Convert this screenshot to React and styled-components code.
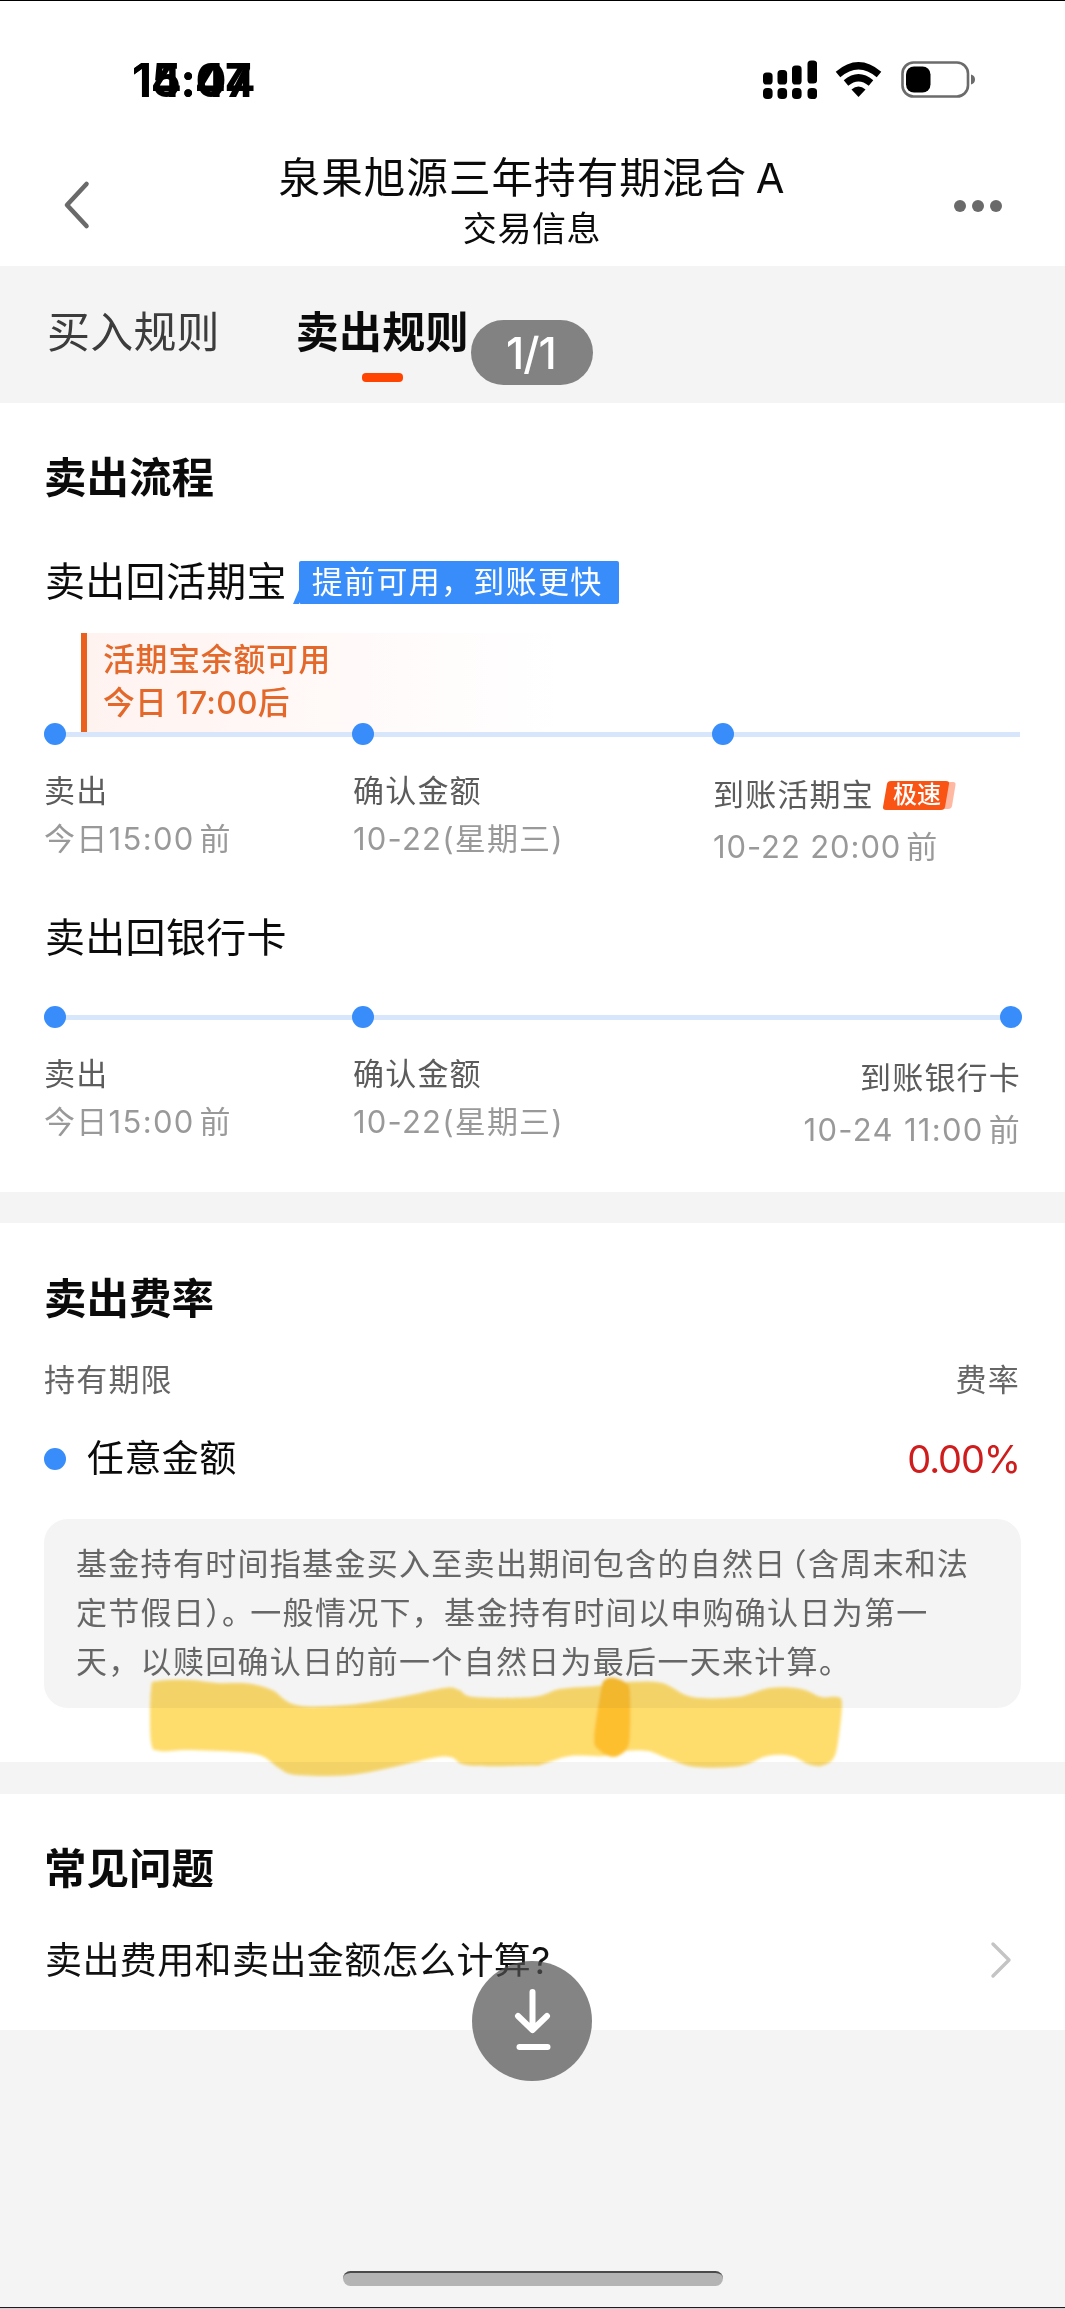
import React from "react";
import styled, { createGlobalStyle } from "styled-components";

const GlobalStyle = createGlobalStyle`
  * { box-sizing: border-box; }
  body {
    margin: 0;
    background: #f4f4f4;
    font-family: Inter, "Noto Sans CJK SC", sans-serif;
    color: #0b0b0b;
  }
`;

const Screen = styled.main`
  position: relative;
  display: flex;
  flex-direction: column;
  width: 1065px;
  height: 2309px;
  background: #f4f4f4;
  border-top: 1px solid #000;
  border-bottom: 1px solid #cfcfcf;
  box-shadow: inset 0 -1px #1c1c1e;
  overflow: hidden;
`;

const Text = styled.span`
  display: block;
  white-space: nowrap;
  font-size: ${(p) => p.$size}px;
  line-height: ${(p) => p.$line}px;
  letter-spacing: ${(p) => p.$track || 0}px;
  word-spacing: ${(p) => p.$word || 0}px;
  font-weight: ${(p) => p.$weight || 400};
  color: ${(p) => p.$color || "#0b0b0b"};
`;

const Kern = styled.span`
  margin-left: ${(p) => p.$before || 0}px;
  margin-right: ${(p) => p.$after || 0}px;
`;

const HalfWidth = styled(Kern)`
  font-feature-settings: "halt" 1;
`;

const StatusBar = styled.header`
  display: flex;
  justify-content: space-between;
  align-items: center;
  height: 129px;
  padding: 28px 89px 0 132px;
  background: #fff;
`;

const Clock = styled.div`
  display: grid;
  font-size: 46px;
  line-height: 52px;
  font-weight: 700;
  color: #000;
`;

const ClockFace = styled.span`
  grid-area: 1 / 1;
  letter-spacing: ${(p) => p.$track}px;
`;

const StatusIcons = styled.div`
  display: flex;
  align-items: center;
`;

const SignalBox = styled.div`
  display: flex;
  margin-right: 18px;
`;

const WifiBox = styled.div`
  display: flex;
  margin-right: 19px;
`;

const NavBar = styled.nav`
  display: flex;
  justify-content: space-between;
  align-items: flex-start;
  height: 136px;
  padding: 20px 63px 0 62px;
  background: #fff;
`;

const NavTitle = styled.div`
  display: flex;
  flex-direction: column;
  align-items: center;
`;

const NavIcon = styled.div`
  display: flex;
  justify-content: ${(p) => p.$align};
  width: 50px;
  padding-top: ${(p) => p.$top}px;
`;

const Tabs = styled.div`
  display: flex;
  gap: 76px;
  height: 137px;
  padding: 36px 47px 0;
`;

const Tab = styled.div`
  display: flex;
  flex-direction: column;
  align-items: center;
  gap: 11px;
`;

const TabMark = styled.i`
  width: 41px;
  height: 9px;
  border-radius: 4px;
  background: #ff4400;
`;

const Section = styled.section`
  display: flex;
  flex-direction: column;
  height: ${(p) => p.$height}px;
  margin-bottom: ${(p) => p.$gap || 0}px;
  padding: ${(p) => p.$top}px 44px 0;
  background: #fff;
`;

const TitleRow = styled.div`
  display: flex;
  align-items: center;
  height: 60px;
  margin-top: ${(p) => p.$mt}px;
  padding-left: 1px;
`;

const BubbleWrap = styled.div`
  display: flex;
  align-items: flex-end;
  margin-left: 6px;
`;

const Bubble = styled.div`
  height: 43px;
  width: 320px;
  padding-left: 13px;
  border-radius: 2px;
  background: #388dfa;
`;

const Notice = styled.div`
  width: 480px;
  height: 99px;
  margin: 21px 0 0 37px;
  padding: 5px 0 0 16px;
  border-left: 6px solid #e9611c;
  background: linear-gradient(90deg, #fff3f0, #fff9f8 50%, #ffffff);
`;

const Track = styled.div`
  display: grid;
  grid-template-columns: ${(p) => p.$cols};
  justify-content: start;
  align-items: center;
  height: 22px;
  margin-top: ${(p) => p.$mt}px;
  background: linear-gradient(#d8e6fc, #d8e6fc) 0 9px / 976px 5px no-repeat;
`;

const Dot = styled.i`
  width: 22px;
  height: 22px;
  border-radius: 50%;
  background: #388dfa;
`;

const Steps = styled.div`
  display: flex;
  height: 100px;
  margin-top: 22px;
`;

const Step = styled.div`
  display: flex;
  flex-direction: column;
  align-items: ${(p) => (p.$end ? "flex-end" : "flex-start")};
  flex: ${(p) => (p.$width ? `0 0 ${p.$width}px` : "1")};
  gap: ${(p) => p.$gap || 0}px;
  padding-top: ${(p) => p.$top || 0}px;
`;

const StepHead = styled.div`
  display: flex;
  align-items: center;
  gap: 9px;
`;

const Speed = styled.div`
  display: grid;
  width: 73px;
  height: 29px;
`;

const SpeedShape = styled.svg`
  grid-area: 1 / 1;
`;

const SpeedText = styled.span`
  grid-area: 1 / 1;
  padding-left: 10px;
  font-size: 24px;
  line-height: 28px;
  font-weight: 500;
  color: #fff;
`;

const Row = styled.div`
  display: flex;
  justify-content: space-between;
  align-items: center;
  height: ${(p) => p.$height}px;
  margin-top: ${(p) => p.$mt || 0}px;
  padding: 0 1px 0 ${(p) => p.$left || 0}px;
`;

const Legend = styled.div`
  display: flex;
  align-items: center;
  gap: 21px;
`;

const Note = styled.div`
  width: 977px;
  height: 189px;
  margin-top: 32px;
  padding: 21px 32px 0;
  border-radius: 24px;
  background: #f4f4f4;
`;

const Marker = styled.svg`
  position: absolute;
  left: 140px;
  top: 1669px;
  mix-blend-mode: multiply;
`;

const PageBadge = styled.div`
  position: absolute;
  left: 471px;
  top: 319px;
  display: flex;
  justify-content: center;
  align-items: center;
  width: 122px;
  height: 65px;
  padding-right: 2px;
  border-radius: 33px;
  background: #828282;
`;

const SaveButton = styled.button`
  position: absolute;
  left: 472px;
  top: 1960px;
  width: 120px;
  height: 120px;
  padding: 0;
  border: 0;
  border-radius: 50%;
  background: rgba(80, 80, 80, 0.7);
`;

const HomeBar = styled.div`
  position: absolute;
  left: 343px;
  top: 2270px;
  width: 380px;
  height: 15px;
  border-radius: 8px;
  border-top: 2px solid #4a4a4a;
  background: #b4b4b4;
`;

function Signal() {
  const bars = [
    [0, 12], [14.5, 9.5], [29, 5], [44.5, 0],
  ];
  return (
    <svg width="54" height="40" viewBox="0 0 54 40">
      {bars.map(([x, y]) => (
        <g key={x}>
          <rect x={x} y={y + 0.5} width="9.6" height={(x > 40 ? 23 : 24) - y} rx="3.6" />
          <rect x={x} y="28" width="9.6" height="11" rx="4" />
        </g>
      ))}
    </svg>
  );
}

function Wifi() {
  return (
    <svg width="47" height="36" viewBox="0 0 47 36">
      <g fill="none" stroke="#000" strokeWidth="7">
        <path d="M3 12.5 Q23.5 -5 44 12.5" />
        <path d="M11 21 Q23.5 10.5 36 21" />
      </g>
      <path d="M16.5 27.5 Q23.5 21.5 30.5 27.5 L23.5 35 Z" />
    </svg>
  );
}

function Battery() {
  return (
    <svg width="75" height="38" viewBox="0 0 75 38">
      <rect x="1.5" y="1.5" width="65.5" height="34" rx="11" fill="none" stroke="#6b6b6b" strokeWidth="2.6" />
      <rect x="5" y="5.5" width="24.5" height="26" rx="8" />
      <path d="M70 13.5 Q74 14.5 74 18.5 Q74 22.5 70 23.5 Z" fill="#6b6b6b" />
    </svg>
  );
}

// Closed Catmull-Rom curve through the outline points of a marker stroke.
function smoothOutline(points) {
  const n = points.length;
  const at = (i) => points[(i + n) % n];
  let d = `M${at(0)[0]} ${at(0)[1]}`;
  for (let i = 0; i < n; i++) {
    const [a, b, c, e] = [at(i - 1), at(i), at(i + 1), at(i + 2)];
    d += ` C${b[0] + (c[0] - a[0]) / 6} ${b[1] + (c[1] - a[1]) / 6} ${c[0] - (e[0] - b[0]) / 6} ${c[1] - (e[1] - b[1]) / 6} ${c[0]} ${c[1]}`;
  }
  return d + "Z";
}

const strokeOutline = [
  [151, 1689], [158, 1681], [190, 1680], [217, 1683], [248, 1683.5], [272, 1690],
  [296, 1705], [347, 1705], [401, 1697], [445, 1688], [459, 1690], [474, 1697],
  [533, 1697], [560, 1689], [597, 1686], [628, 1682], [662, 1683], [692, 1697],
  [737, 1697], [770, 1688], [801, 1689], [821, 1697], [837, 1697], [842, 1704],
  [838, 1742], [833, 1759], [821, 1766], [808, 1764], [791, 1756], [767, 1756],
  [740, 1766], [696, 1767], [669, 1759], [648, 1751], [625, 1751], [604, 1756],
  [570, 1756], [543, 1764], [533, 1765.5], [469, 1765.5], [452, 1757.6],
  [435, 1757.6], [398, 1766], [350, 1775], [296, 1775], [279, 1768], [262, 1756],
  [238, 1752], [187, 1750], [160, 1751], [151, 1742],
];

const overlapOutline = [
  [601, 1690], [605, 1680], [614, 1678], [626, 1683], [630, 1692],
  [630, 1735], [626, 1750], [613, 1757], [599, 1750], [594, 1738],
];

function FlowLabels({ last }) {
  return (
    <Steps>
      <Step $width={309}>
        <Text $size={31} $track={1.2} $line={48} $color="#5c5c5c">卖出</Text>
        <Text $size={31} $track={1.3} $line={48} $color="#999">今日15:00<Kern $before={5}>前</Kern></Text>
      </Step>
      <Step $width={360}>
        <Text $size={31} $track={1.2} $line={48} $color="#5c5c5c">确认金额</Text>
        <Text $size={31} $track={1.2} $line={48} $color="#999">10-22(星期三)</Text>
      </Step>
      {last}
    </Steps>
  );
}

export default function App() {
  return (
    <>
      <GlobalStyle />
      <Screen>
        <StatusBar>
          <Clock>
            <ClockFace $track={-0.4}>15:07</ClockFace>
            <ClockFace $track={-1.2}>14:44</ClockFace>
          </Clock>
          <StatusIcons>
            <SignalBox><Signal /></SignalBox>
            <WifiBox><Wifi /></WifiBox>
            <Battery />
          </StatusIcons>
        </StatusBar>
        <NavBar>
          <NavIcon $align="flex-start" $top={30}>
            <svg width="30" height="50" viewBox="0 0 30 50">
              <path d="M24.5 4 L5 25 L24.5 46" fill="none" stroke="#6a6a6a" strokeWidth="4.6" strokeLinecap="round" strokeLinejoin="round" />
            </svg>
          </NavIcon>
          <NavTitle>
            <Text $size={41.6} $track={1} $word={-4} $line={56}>泉果旭源三年持有期混合 A</Text>
            <Text $size={34} $track={0.6} $line={46}>交易信息</Text>
          </NavTitle>
          <NavIcon $align="flex-end" $top={50}>
            <svg width="48" height="12" viewBox="0 0 48 12">
              <circle cx="6" cy="6" r="6" fill="#6a6a6a" />
              <circle cx="24" cy="6" r="6" fill="#6a6a6a" />
              <circle cx="42" cy="6" r="6" fill="#6a6a6a" />
            </svg>
          </NavIcon>
        </NavBar>
        <Tabs>
          <Tab>
            <Text $size={43} $track={0.2} $line={60} $color="#3c3c3c">买入规则</Text>
          </Tab>
          <Tab>
            <Text $size={43} $track={0.2} $line={60} $weight={700}>卖出规则</Text>
            <TabMark />
          </Tab>
        </Tabs>

        <Section $height={789} $gap={31} $top={45}>
          <Text $size={42.5} $line={60} $weight={700}>卖出流程</Text>
          <TitleRow $mt={44}>
            <Text $size={40} $track={0.3} $line={60}>卖出回活期宝</Text>
            <BubbleWrap>
              <svg width="6" height="14" viewBox="0 0 6 14">
                <path d="M6 0 L6 14 L0 14 Z" fill="#388dfa" />
              </svg>
              <Bubble>
                <Text $size={31} $track={1.3} $line={41} $color="#fff">提前可用，到账更快</Text>
              </Bubble>
            </BubbleWrap>
          </TitleRow>
          <Notice>
            <Text $size={31.8} $track={0.8} $line={43} $weight={500} $color="#e3682a">活期宝余额可用</Text>
            <Text $size={31.8} $track={0.2} $line={43} $weight={500} $color="#e3682a">今日 17:00后</Text>
          </Notice>
          <Track $mt={-9} $cols="308px 360px 22px">
            <Dot /><Dot /><Dot />
          </Track>
          <FlowLabels
            last={
              <Step $top={4} $gap={4}>
                <StepHead>
                  <Text $size={31} $track={1.2} $line={48} $color="#5c5c5c">到账活期宝</Text>
                  <Speed>
                    <SpeedShape width="73" height="29" viewBox="0 0 73 29">
                      <path d="M12 1 H70 Q73 1 72.5 4 L69 25 Q68.400 28 65 28 H12 Z" fill="#ffb9a3" />
                      <path d="M8 0 H63 Q66.500 0 66 3 L62 26 Q61.500 29 58 29 H3 Q-.5 29 0 26 L4 3 Q4.500 0 8 0 Z" fill="#fa5414" />
                    </SpeedShape>
                    <SpeedText>极速</SpeedText>
                  </Speed>
                </StepHead>
                <Text $size={31} $track={0.9} $line={48} $color="#999">10-22 20:00<Kern $before={5}>前</Kern></Text>
              </Step>
            }
          />
          <TitleRow $mt={41}>
            <Text $size={40} $track={0.3} $line={60}>卖出回银行卡</Text>
          </TitleRow>
          <Track $mt={38} $cols="308px 648px 22px">
            <Dot /><Dot /><Dot />
          </Track>
          <FlowLabels
            last={
              <Step $top={4} $gap={4} $end>
                <Text $size={31} $track={1.2} $line={48} $color="#5c5c5c">到账银行卡</Text>
                <Text $size={31} $track={1.3} $line={48} $color="#999">10-24 11:00<Kern $before={5}>前</Kern></Text>
              </Step>
            }
          />
        </Section>

        <Section $height={539} $gap={32} $top={46}>
          <Text $size={42.5} $line={60} $weight={700}>卖出费率</Text>
          <Row $height={48} $mt={27}>
            <Text $size={31} $track={1.2} $line={48} $color="#666">持有期限</Text>
            <Text $size={31} $track={1.2} $line={48} $color="#666">费率</Text>
          </Row>
          <Row $height={56} $mt={27}>
            <Legend>
              <Dot />
              <Text $size={37} $track={0.4} $line={56}>任意金额</Text>
            </Legend>
            <Text $size={38} $track={-1.1} $line={56} $color="#cf1d1d">0.00%</Text>
          </Row>
          <Note>
            <Text $size={31} $track={1.3} $line={48.8} $color="#666">
              基金持有时间指基金买入至卖出期间包含的自然日<HalfWidth $before={4.5}>（</HalfWidth>含周末和法
            </Text>
            <Text $size={31} $track={1.3} $line={48.8} $color="#666">
              定节假日<Kern $after={-4}>）。</Kern>一般情况下，基金持有时间以申购确认日为第一
            </Text>
            <Text $size={31} $track={1.3} $line={48.8} $color="#666">
              天，以赎回确认日的前一个自然日为最后一天来计算。
            </Text>
          </Note>
        </Section>

        <Section $height={236} $top={45}>
          <Text $size={42.5} $line={60} $weight={700}>常见问题</Text>
          <Row $height={56} $mt={34} $left={1}>
            <Text $size={37} $track={0.4} $line={56} $color="#111">卖出费用和卖出金额怎么计算?</Text>
            <svg width="30" height="40" viewBox="0 0 30 40">
              <path d="M3 3 L19 19 L3 35" fill="none" stroke="#c4c4c4" strokeWidth="3.4" strokeLinecap="round" strokeLinejoin="round" />
            </svg>
          </Row>
        </Section>

        <Marker width="710" height="120" viewBox="140 1670 710 120">
          <defs>
            <filter id="soft" x="-5%" y="-10%" width="110%" height="120%">
              <feGaussianBlur stdDeviation="1.4" />
            </filter>
          </defs>
          <g filter="url(#soft)">
            <path d={smoothOutline(strokeOutline)} fill="#fedd6d" />
            <path d={smoothOutline(overlapOutline)} fill="#fdbf2d" />
          </g>
        </Marker>

        <PageBadge>
          <Text $size={44} $track={-1} $line={60} $weight={500} $color="#fff">1/1</Text>
        </PageBadge>
        <SaveButton aria-label="保存">
          <svg width="120" height="120" viewBox="0 0 120 120">
            <g fill="none" stroke="#fff" strokeWidth="6" strokeLinecap="round" strokeLinejoin="round">
              <path d="M60.500 31 V68 M46 55 L60.500 69 L75 55" />
              <path d="M47.500 86 H75.500" />
            </g>
          </svg>
        </SaveButton>
        <HomeBar />
      </Screen>
    </>
  );
}
